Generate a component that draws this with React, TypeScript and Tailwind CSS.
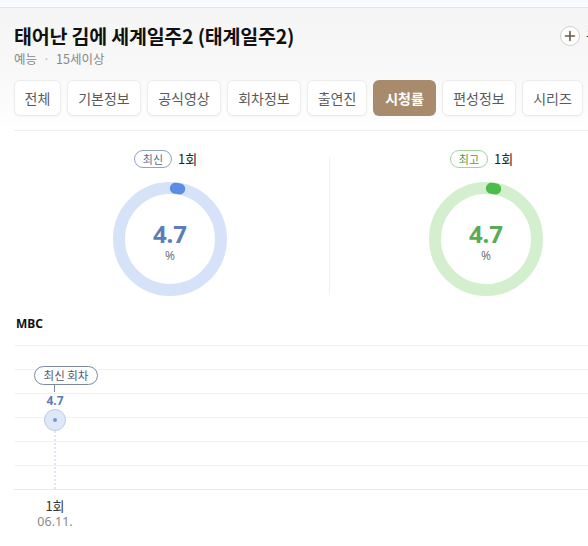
import React from "react";

const KR = { fontFamily: '"Noto Sans CJK KR", "Noto Sans", sans-serif' };

function Donut({ track, fill, color, value }: { track: string; fill: string; color: string; value: string }) {
  const r = 51;
  const c = 57;
  const a1 = (6 * Math.PI) / 180;
  const a2 = (11 * Math.PI) / 180;
  const x1 = c + r * Math.sin(a1);
  const y1 = c - r * Math.cos(a1);
  const x2 = c + r * Math.sin(a2);
  const y2 = c - r * Math.cos(a2);
  return (
    <div className="relative w-[114px] h-[114px]">
      <svg width="114" height="114" viewBox="0 0 114 114" className="absolute inset-0">
        <circle cx={c} cy={c} r={r} fill="none" stroke={track} strokeWidth="12" />
        <path d={`M ${x1} ${y1} A ${r} ${r} 0 0 1 ${x2} ${y2}`} fill="none" stroke={fill} strokeWidth="11" strokeLinecap="round" />
      </svg>
      <div className="absolute inset-0 flex flex-col items-center pt-[40px]">
        <div className="text-[24px] font-bold leading-[24px]" style={{ color, fontFamily: '"Noto Sans", sans-serif' }}>{value}</div>
        <div className="mt-[3px] text-[12px] leading-[14px] text-[#777]" style={{ fontFamily: '"Noto Sans", sans-serif' }}>%</div>
      </div>
    </div>
  );
}

const tabs: [string, number][] = [
  ["전체", 47],
  ["기본정보", 74],
  ["공식영상", 74],
  ["회차정보", 74],
  ["출연진", 60],
  ["시청률", 63],
  ["편성정보", 74],
  ["시리즈", 61],
];

export default function App() {
  return (
    <div className="w-[588px] h-[546px] overflow-hidden bg-white" style={KR}>
      <div className="h-[8px] bg-[#f8fbff] border-b border-[#e2e5e9]" />
      <div className="bg-gradient-to-b from-[#f5f5f5] via-[#f8f8f8] to-white pl-[14px] pt-[15px] pb-[14px]">
        <div className="flex items-center h-[26px]">
          <h1 className="text-[19.5px] font-bold text-[#111] leading-[26px] tracking-[-0.2px] whitespace-nowrap">태어난 김에 세계일주2 (태계일주2)</h1>
          <div className="ml-auto mr-[-22px] flex items-center gap-[6px] shrink-0">
            <div className="w-[20px] h-[20px] rounded-full border border-[#cfcfcf] bg-white flex items-center justify-center">
              <svg width="12" height="12" viewBox="0 0 12 12">
                <path d="M6 1.5v9M1.5 6h9" stroke="#6b5a45" strokeWidth="1.6" strokeLinecap="round" />
              </svg>
            </div>
            <span className="text-[13px] text-[#333]">구독</span>
          </div>
        </div>
        <div className="mt-[2px] text-[12.5px] text-[#888] leading-[16px] flex items-center gap-[6px]">
          <span>예능</span>
          <span className="text-[#bbb]">·</span>
          <span>15세이상</span>
        </div>
        <div className="mt-[13px] flex gap-[6px]">
          {tabs.map(([t, w]) => {
            const active = t === "시청률";
            return (
              <div
                key={t}
                style={{ width: w }}
                className={
                  "h-[36px] rounded-[6px] flex items-center justify-center text-[14px] shrink-0 " +
                  (active
                    ? "bg-[#a88b6d] text-white font-bold"
                    : "bg-white text-[#5a5a5a] border border-[#ececec] shadow-[0_1px_2px_rgba(0,0,0,0.04)]")
                }
              >
                {t}
              </div>
            );
          })}
        </div>
      </div>
      <div className="ml-[14px] border-t border-[#efefef]" />

      <div className="ml-[14px] w-[631px] grid grid-cols-[315px_1px_315px] mt-[18px]">
        <div className="flex flex-col items-center">
          <div className="flex items-center gap-[6px] h-[20px] pr-[12px]">
            <span className="h-[18px] px-[8px] rounded-full border border-[#8fa3bf] text-[11px] text-[#5b6f8d] flex items-center leading-none">최신</span>
            <span className="text-[13px] text-[#222]">1회</span>
          </div>
          <div className="mt-[13px] mr-[3px]">
            <Donut track="#d6e2f7" fill="#5b8ee2" color="#5d7db8" value="4.7" />
          </div>
        </div>
        <div className="mt-[8px] h-[138px] bg-[#f0f0f0]" />
        <div className="flex flex-col items-center">
          <div className="flex items-center gap-[6px] h-[20px] pr-[12px]">
            <span className="h-[18px] px-[8px] rounded-full border border-[#a3d4a0] text-[11px] text-[#4e9a4c] flex items-center leading-none">최고</span>
            <span className="text-[13px] text-[#222]">1회</span>
          </div>
          <div className="mt-[13px] mr-[3px]">
            <Donut track="#d3efce" fill="#4cbd4a" color="#5aaa56" value="4.7" />
          </div>
        </div>
      </div>

      <div className="pl-[16px] mt-[20px] text-[12px] font-bold text-[#111] leading-[16px]" style={{ fontFamily: '"Noto Sans", sans-serif' }}>MBC</div>

      <div className="relative ml-[14px] mt-[13px]">
        <div className="flex flex-col">
          {[0, 1, 2, 3, 4, 5].map((i) => (
            <div key={i} className="h-[24px] border-t border-[#f1f1f1]" />
          ))}
          <div className="border-t border-[#e8e8e8]" />
        </div>
        <div className="absolute left-[20px] top-[21px] w-[64px] h-[19px] rounded-full border border-[#7d8a9e] bg-white flex items-center justify-center text-[11.5px] text-[#4d5c74] leading-none">
          최신 회차
        </div>
        <div className="absolute left-[40px] top-[40px] w-px h-[7px] bg-[#7d8a9e]" />
        <div className="absolute left-[26px] top-[49px] w-[30px] text-center text-[12px] font-bold text-[#5d7db8] leading-[14px]" style={{ fontFamily: '"Noto Sans", sans-serif' }}>4.7</div>
        <div className="absolute left-[40px] top-[86px] h-[58px] border-l-2 border-dotted border-[#dde6f4]" />
        <div className="absolute left-[30px] top-[64px] w-[22px] h-[22px] rounded-full bg-[#dfe8f8] border border-[#b8cbee] flex items-center justify-center">
          <div className="w-[4px] h-[4px] rounded-full bg-[#7a97cf]" />
        </div>
        <div className="absolute left-[21px] top-[153px] w-[40px] flex flex-col items-center">
          <span className="text-[13px] text-[#333] leading-[16px]">1회</span>
          <span className="text-[12.5px] text-[#8a8a8a] leading-[16px]" style={{ fontFamily: '"Noto Sans", sans-serif' }}>06.11.</span>
        </div>
      </div>
    </div>
  );
}
